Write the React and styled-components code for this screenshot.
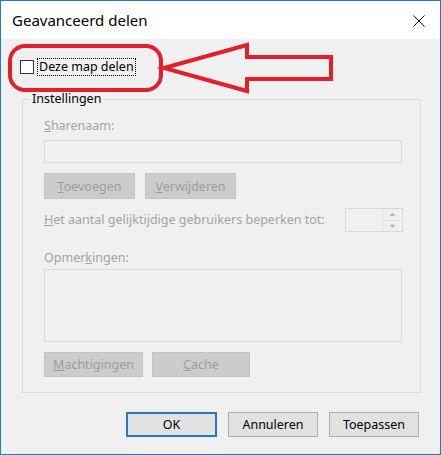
import React from "react";
import styled, { createGlobalStyle } from "styled-components";

const Global = createGlobalStyle`
	html, body {
		margin: 0;
		padding: 0;
		background: #fff;
	}
	* {
		box-sizing: border-box;
	}
`;

const Window = styled.div`
	position: relative;
	width: 441px;
	height: 455px;
	border: 1px solid #1f7acb;
	display: flex;
	flex-direction: column;
	font-family: "Noto Sans", "Open Sans", sans-serif;
	font-size: 12.5px;
	color: #000;
`;

const TitleBar = styled.div`
	height: 38px;
	background: #fff;
	display: flex;
	align-items: center;
	justify-content: space-between;
	padding: 0 15px 0 11px;
	font-size: 15px;
`;

const CloseIcon = styled.svg`
	width: 12px;
	height: 12px;
	margin-top: 2px;
`;

const Body = styled.div`
	flex: 1;
	background: #f0f0f0;
	padding: 19px 19px 0 19px;
	display: flex;
	flex-direction: column;
`;

const CheckRow = styled.label`
	display: flex;
	align-items: center;
	gap: 3px;
	height: 18px;
`;

const Box = styled.span`
	width: 14px;
	height: 14px;
	border: 1px solid #333;
	background: #fff;
`;

const FocusText = styled.span`
	border: 1px dotted #000;
	padding: 0 1px;
	line-height: 16px;
`;

const GroupBox = styled.div`
	margin: 23px 0 0 2px;
	border: 1px solid #dcdcdc;
	padding: 0 18px 15px 21px;
	display: flex;
	flex-direction: column;
`;

const Legend = styled.div`
	width: fit-content;
	margin: -9px 0 0 -14px;
	padding: 0 2px;
	background: #f0f0f0;
	line-height: 16px;
`;

const Label = styled.div`
	color: #a3a3a3;
	line-height: 16px;
	white-space: nowrap;
	flex-shrink: 0;
	margin-top: ${(p) => p.$top || 0}px;
	u {
		text-decoration: underline;
	}
`;

const Field = styled.div`
	height: ${(p) => p.$h}px;
	margin-top: ${(p) => p.$top}px;
	border: 1px solid #d9d9d9;
	background: #f0f0f0;
`;

const Row = styled.div`
	display: flex;
	align-items: center;
	gap: ${(p) => p.$gap || 10}px;
	margin-top: ${(p) => p.$top || 0}px;
	justify-content: ${(p) => p.$justify || "flex-start"};
`;

const Button = styled.button`
	font: inherit;
	width: ${(p) => p.$w}px;
	height: ${(p) => p.$h || 25}px;
	padding: 0;
	background: ${(p) => (p.$disabled ? "#cccccc" : "#e1e1e1")};
	border: ${(p) =>
		p.$default ? "2px solid #2a78c6" : p.$disabled ? "1px solid #c4c4c4" : "1px solid #adadad"};
	color: ${(p) => (p.$disabled ? "#9d9d9d" : "#000")};
`;

const Spacer = styled.div`
	flex: 1;
`;

const Spinner = styled.div`
	width: 58px;
	height: 24px;
	flex-shrink: 0;
	border: 1px solid #d9d9d9;
	display: flex;
	justify-content: flex-end;
`;

const SpinButtons = styled.div`
	width: 20px;
	border-left: 1px solid #e3e3e3;
	display: flex;
	flex-direction: column;
	svg {
		flex: 1;
	}
	svg + svg {
		border-top: 1px solid #e3e3e3;
	}
`;

const Overlay = styled.svg`
	position: absolute;
	left: 0;
	top: 0;
	pointer-events: none;
`;

export default function App() {
	return (
		<Window>
			<Global />
			<TitleBar>
				Geavanceerd delen
				<CloseIcon viewBox="0 0 12 12">
					<path d="M0.5 0.5 L11.5 11.5 M11.5 0.5 L0.5 11.5" stroke="#111" strokeWidth="1" />
				</CloseIcon>
			</TitleBar>
			<Body>
				<CheckRow>
					<Box />
					<FocusText>Deze map delen</FocusText>
				</CheckRow>
				<GroupBox>
					<Legend>Instellingen</Legend>
					<Label $top={11}>
						<u>S</u>harenaam:
					</Label>
					<Field $h={23} $top={6} />
					<Row $top={10}>
						<Button $disabled $w={91} $h={26}>
							<u>T</u>oevoegen
						</Button>
						<Button $disabled $w={91} $h={26}>
							<u>V</u>erwijderen
						</Button>
					</Row>
					<Row $top={9}>
						<Label>
							<u>H</u>et aantal gelijktijdige gebruikers beperken tot:
						</Label>
						<Spacer />
						<Spinner>
							<SpinButtons>
								<svg viewBox="0 0 20 11">
									<path d="M7 7 L13 7 L10 4 Z" fill="#b0b0b0" />
								</svg>
								<svg viewBox="0 0 20 11">
									<path d="M7 4 L13 4 L10 7 Z" fill="#b0b0b0" />
								</svg>
							</SpinButtons>
						</Spinner>
					</Row>
					<Label $top={18}>
						Opmer<u>k</u>ingen:
					</Label>
					<Field $h={73} $top={3} />
					<Row $top={10} $gap={9}>
						<Button $disabled $w={99}>
							<u>M</u>achtigingen
						</Button>
						<Button $disabled $w={98}>
							<u>C</u>ache
						</Button>
					</Row>
				</GroupBox>
				<Row $top={19} $gap={11} $justify="flex-end" style={{ marginRight: 2 }}>
					<Button $default $w={91}>OK</Button>
					<Button $w={90}>Annuleren</Button>
					<Button $w={90}>Toepassen</Button>
				</Row>
			</Body>
			<Overlay width="441" height="455" viewBox="0 0 441 455">
				<rect x="9" y="45" width="151" height="44" rx="15" fill="none" stroke="#e2202c" strokeWidth="4" />
				<path
					d="M163 67 L246 44 L246 56 L330 56 L330 78 L246 78 L246 90 Z"
					fill="none"
					stroke="#e2202c"
					strokeWidth="4"
					strokeLinejoin="miter"
				/>
			</Overlay>
		</Window>
	);
}
